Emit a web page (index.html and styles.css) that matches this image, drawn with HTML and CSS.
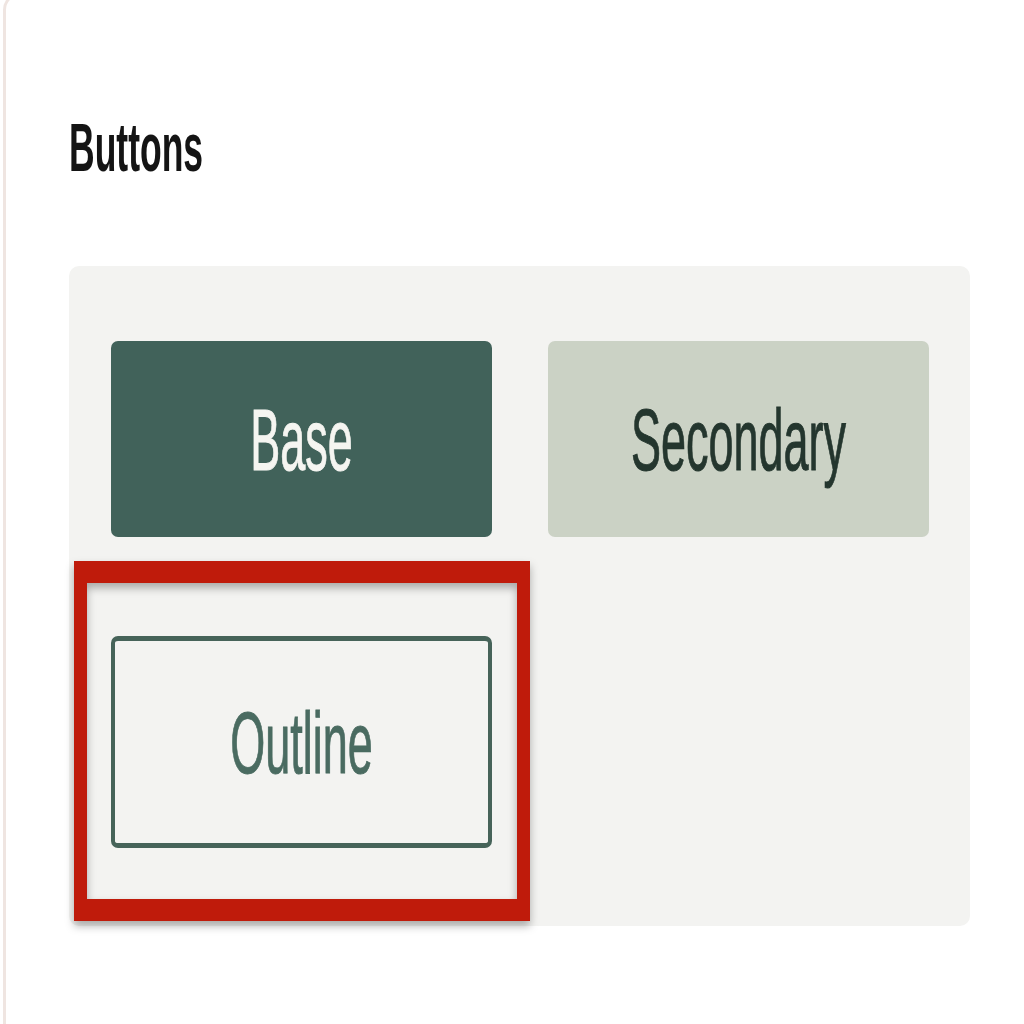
FILE: index.html
```html
<!DOCTYPE html>
<html>
<head>
<meta charset="utf-8">
<link rel="stylesheet" href="styles.css">
</head>
<body>
<div class="card">
  <h2 class="title"><span class="stretch">Buttons</span></h2>
  <div class="panel">
    <div class="grid">
      <button class="btn btn-base"><span class="stretch">Base</span></button>
      <button class="btn btn-secondary"><span class="stretch">Secondary</span></button>
      <button class="btn btn-outline"><span class="stretch">Outline</span></button>
    </div>
    <div class="highlight"></div>
  </div>
</div>
</body>
</html>
```
FILE: styles.css
```css
html, body {
  margin: 0;
  padding: 0;
  background: #ffffff;
  overflow: hidden;
}
body {
  width: 1024px;
  height: 1024px;
  font-family: "Liberation Sans", Arial, sans-serif;
}
.card {
  margin: -8px 0 0 3px;
  width: 1100px;
  height: 1100px;
  box-sizing: border-box;
  border: 3px solid #efe5e1;
  border-radius: 18px;
  background: #ffffff;
  padding: 137px 0 0 63px;
}
.title {
  margin: 0;
  font-size: 35.5px;
  font-weight: 700;
  line-height: 1;
  height: 35.5px;
  color: #141414;
}
.stretch {
  display: inline-block;
  line-height: 1;
  transform: scaleY(1.92);
  transform-origin: center;
}
.panel {
  position: relative;
  margin-top: 98px;
  width: 901px;
  box-sizing: border-box;
  background: #f3f3f1;
  border-radius: 10px;
  padding: 75px 41px 78px 42px;
}
.grid {
  display: grid;
  grid-template-columns: 381px 381px;
  grid-template-rows: 196px 212px;
  column-gap: 56px;
  row-gap: 99px;
}
.btn {
  display: flex;
  align-items: center;
  justify-content: center;
  margin: 0;
  padding: 3px 0 0 0;
  border: none;
  border-radius: 7px;
  font-family: "Liberation Sans", Arial, sans-serif;
  font-size: 45px;
  font-weight: 400;
  -webkit-text-stroke: 0.5px currentColor;
  cursor: pointer;
}
.btn-base {
  background: #41625a;
  color: #f5f5f1;
}
.btn-secondary {
  background: #cbd2c5;
  color: #24362e;
}
.btn-outline {
  background: transparent;
  color: #4a6b61;
  border-style: solid;
  border-color: #466359;
  border-width: 5px 4px;
  border-radius: 7px;
}
.highlight {
  position: absolute;
  left: 5px;
  top: 295px;
  width: 456px;
  height: 360px;
  box-sizing: border-box;
  border-style: solid;
  border-color: #bf1b0b;
  border-width: 22px 13px;
  filter: drop-shadow(0 5px 4px rgba(0, 0, 0, 0.3));
}
```
